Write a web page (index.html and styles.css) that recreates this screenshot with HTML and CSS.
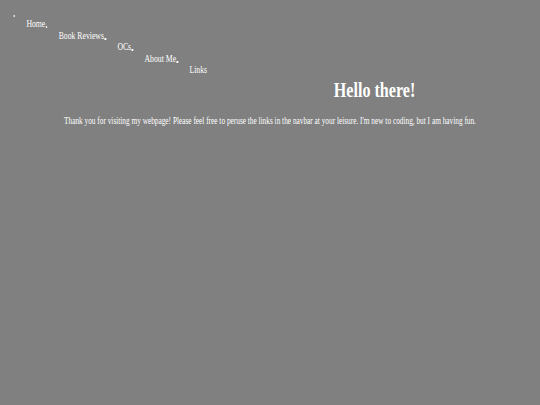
FILE: index.html
```html
<!DOCTYPE html>
<html lang="en">
<head>
<meta charset="utf-8">
<title>Hello there!</title>
<link rel="stylesheet" href="styles.css">
</head>
<body>
<div class="viewport">
<div class="page">
  <nav class="nav">
    <div class="step">
      <span class="dot"></span>
      <div class="next">
        <a class="link" href="#">Home</a>
        <div class="step">
          <span class="dot"></span>
          <div class="next">
            <a class="link" href="#">Book Reviews</a>
            <div class="step">
              <span class="dot"></span>
              <div class="next">
                <a class="link" href="#">OCs</a>
                <div class="step">
                  <span class="dot"></span>
                  <div class="next">
                    <a class="link" href="#">About Me</a>
                    <div class="step">
                      <span class="dot"></span>
                      <div class="next">
                        <a class="link" href="#">Links</a>
                      </div>
                    </div>
                  </div>
                </div>
              </div>
            </div>
          </div>
        </div>
      </div>
    </div>
  </nav>
  <h1 class="title">Hello there!</h1>
  <p class="intro">Thank you for visiting my webpage! Please feel free to peruse the links in the navbar at your leisure. I'm new to coding, but I am having fun.</p>
</div>
</div>
</body>
</html>
```

FILE: styles.css
```css
html, body {
  margin: 0;
  padding: 0;
  background: #808080;
  height: 100%;
}

body {
  font-family: "Liberation Serif", "Times New Roman", serif;
  color: #ffffff;
  overflow: hidden;
}

.viewport {
  width: 540px;
  height: 405px;
  overflow: hidden;
}

.page {
  width: 720px;
  transform: scaleX(0.75);
  transform-origin: 0 0;
}

.nav {
  padding: 6.5px 0 0 17.3px;
  font-size: 10.3px;
  line-height: 11.5px;
}

.step {
  display: flex;
  align-items: flex-start;
}

.next {
  display: flex;
  align-items: flex-start;
  margin-top: 11.5px;
  margin-left: 15px;
}

.link {
  color: #ffffff;
  text-decoration: none;
  white-space: nowrap;
}

.dot {
  flex: none;
  width: 2.6px;
  height: 2px;
  margin-top: 8.3px;
  margin-left: 0.3px;
  background: #ffffff;
  border-radius: 1px;
}

.title {
  margin: 2.6px 0 0;
  padding-left: 445px;
  font-size: 21.5px;
  line-height: 24px;
  font-weight: bold;
}

.intro {
  margin: 12.5px 0 0;
  font-size: 9.75px;
  line-height: 12px;
  text-align: center;
}
```
